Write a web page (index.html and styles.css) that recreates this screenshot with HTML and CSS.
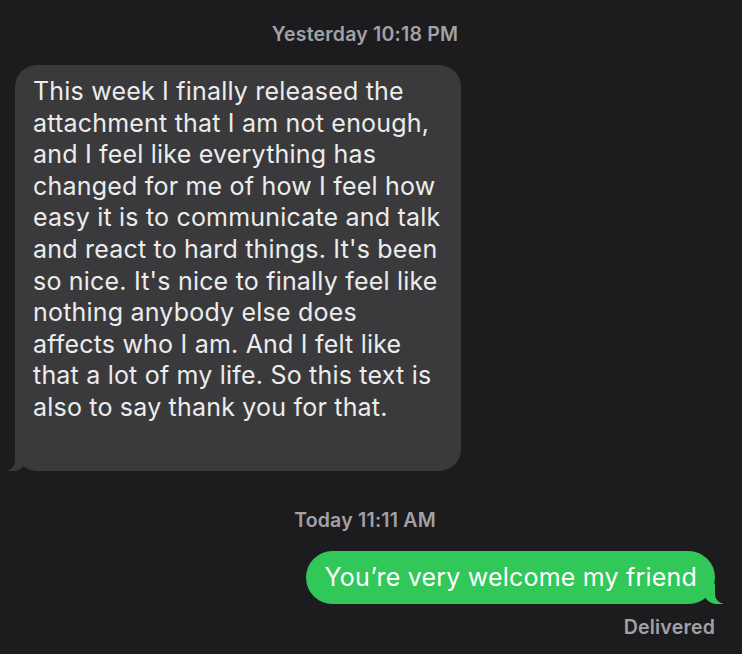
FILE: index.html
```html
<!DOCTYPE html>
<html lang="en">
<head>
    <meta charset="UTF-8">
    <meta name="viewport" content="width=device-width, initial-scale=1.0">
    <title>Messages</title>
    <link rel="stylesheet" href="styles.css">
</head>
<body>
    <div class="thread">
        <div class="stamp stamp-first"><b>Yesterday</b> 10:18 PM</div>
        <div class="bubble received">
            This week I finally released the<br>
            attachment that I am not enough,<br>
            and I feel like everything has<br>
            changed for me of how I feel how<br>
            easy it is to communicate and talk<br>
            and react to hard things. It's been<br>
            so nice. It's nice to finally feel like<br>
            nothing anybody else does<br>
            affects who I am. And I felt like<br>
            that a lot of my life. So this text is<br>
            also to say thank you for that.
        </div>
        <div class="stamp stamp-second"><b>Today</b> 11:11 AM</div>
        <div class="bubble sent">You’re very welcome my friend</div>
        <div class="status">Delivered</div>
    </div>
</body>
</html>
```

FILE: styles.css
```css
body {
    margin: 0;
    background-color: #1c1c1e;
    font-family: Inter, "Noto Sans", sans-serif;
    color: #ececec;
}
.thread {
    width: 700px;
    margin-left: 15px;
    display: flex;
    flex-direction: column;
}
.stamp {
    align-self: center;
    font-size: 19.5px;
    line-height: 22px;
    font-weight: 600;
    letter-spacing: 0.2px;
    color: #a1a1a6;
}
.stamp b {
    font-weight: 600;
}
.stamp-first {
    margin-top: 23px;
}
.stamp-second {
    margin-top: 38px;
}
.bubble {
    position: relative;
    font-size: 25px;
    line-height: 31.6px;
    letter-spacing: 0.2px;
    border-radius: 22px;
}
.received {
    align-self: flex-start;
    box-sizing: border-box;
    width: 446px;
    margin-top: 20px;
    padding: 11px 18px 47px 18px;
    background-color: #3a3a3c;
}
.received::before {
    content: "";
    position: absolute;
    bottom: 0;
    left: -8px;
    width: 20px;
    height: 20px;
    background-color: #3a3a3c;
    border-bottom-right-radius: 14px;
}
.received::after {
    content: "";
    position: absolute;
    bottom: 0;
    left: -10px;
    width: 10px;
    height: 20px;
    background-color: #1c1c1e;
    border-bottom-right-radius: 10px;
}
.sent {
    align-self: flex-end;
    margin-top: 20px;
    padding: 11px 18px 11px 19px;
    border-radius: 27px;
    background-color: #32c759;
    color: #fff;
}
.sent::before {
    content: "";
    position: absolute;
    bottom: 0;
    right: -8px;
    width: 20px;
    height: 20px;
    background-color: #32c759;
    border-bottom-left-radius: 14px;
}
.sent::after {
    content: "";
    position: absolute;
    bottom: 0;
    right: -10px;
    width: 10px;
    height: 20px;
    background-color: #1c1c1e;
    border-bottom-left-radius: 10px;
}
.status {
    align-self: flex-end;
    margin-top: 12px;
    font-size: 19.5px;
    line-height: 22px;
    font-weight: 600;
    letter-spacing: 0.2px;
    color: #a1a1a6;
}
```
